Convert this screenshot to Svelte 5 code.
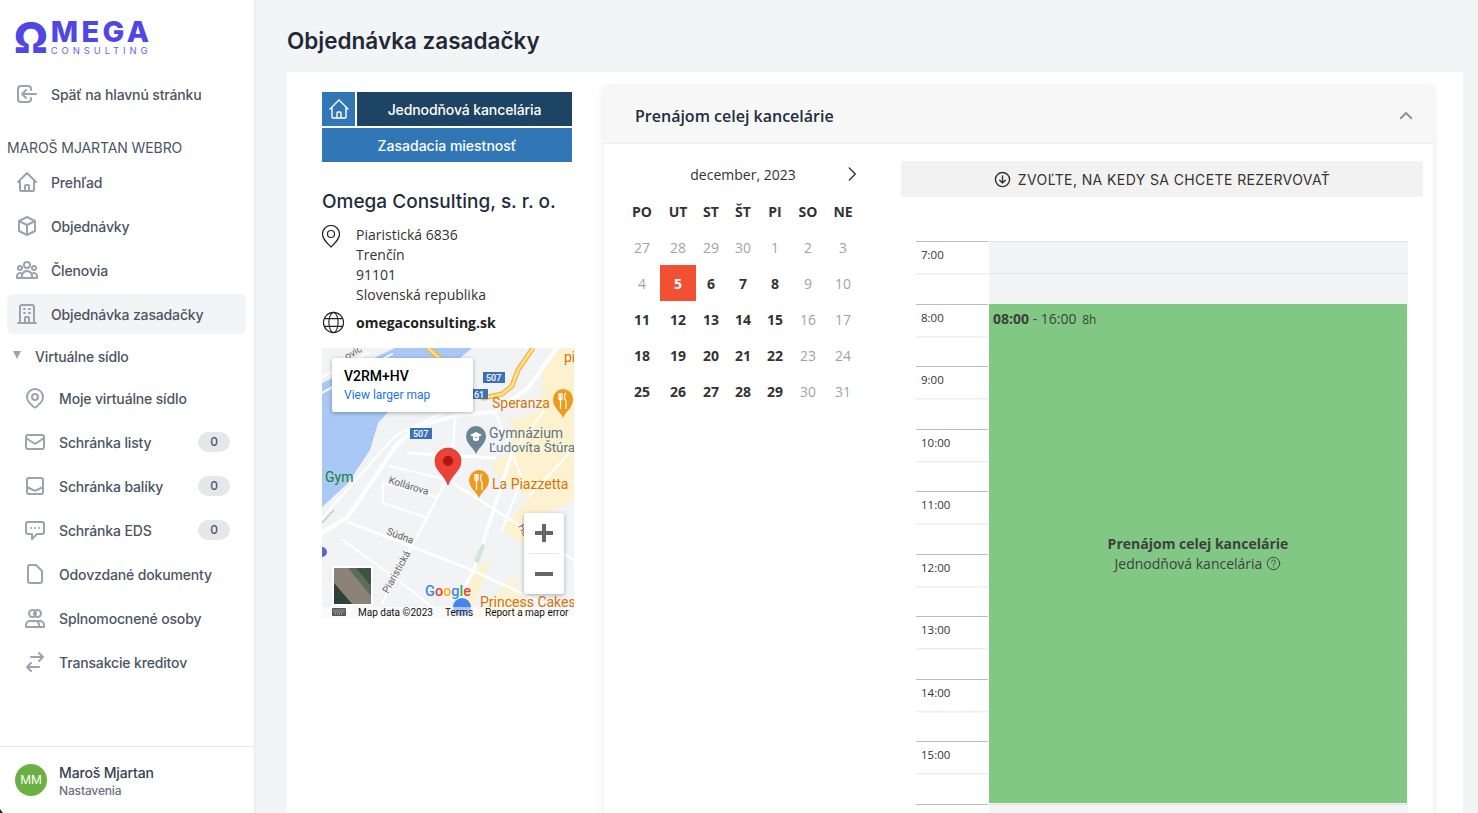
<script>
  const icons = {
    back: 'M11 16l-4-4m0 0l4-4m-4 4h14m-5 4v1a3 3 0 01-3 3H6a3 3 0 01-3-3V7a3 3 0 013-3h7a3 3 0 013 3v1',
    home: 'M3 12l2-2m0 0l7-7 7 7M5 10v10a1 1 0 001 1h3m10-11l2 2m-2-2v10a1 1 0 01-1 1h-3m-6 0a1 1 0 001-1v-4a1 1 0 011-1h2a1 1 0 011 1v4a1 1 0 001 1m-6 0h6',
    cube: 'M20 7l-8-4-8 4m16 0l-8 4m8-4v10l-8 4m0-10L4 7m8 4v10M4 7v10l8 4',
    group: 'M17 20h5v-2a3 3 0 00-5.356-1.857M17 20H7m10 0v-2c0-.656-.126-1.283-.356-1.857M7 20H2v-2a3 3 0 015.356-1.857M7 20v-2c0-.656.126-1.283.356-1.857m0 0a5.002 5.002 0 019.288 0M15 7a3 3 0 11-6 0 3 3 0 016 0zm6 3a2 2 0 11-4 0 2 2 0 014 0zM7 10a2 2 0 11-4 0 2 2 0 014 0z',
    building: 'M19 21V5a2 2 0 00-2-2H7a2 2 0 00-2 2v16m14 0h2m-2 0h-5m-9 0H3m2 0h5M9 7h1m-1 4h1m4-4h1m-1 4h1m-5 10v-5a1 1 0 011-1h2a1 1 0 011 1v5m-4 0h4',
    pin: 'M17.657 16.657L13.414 20.9a1.998 1.998 0 01-2.827 0l-4.244-4.243a8 8 0 1111.314 0zM15 11a3 3 0 11-6 0 3 3 0 016 0z',
    mail: 'M3 8l7.89 5.26a2 2 0 002.22 0L21 8M5 19h14a2 2 0 002-2V7a2 2 0 00-2-2H5a2 2 0 00-2 2v10a2 2 0 002 2z',
    inbox: 'M6 4h12a2 2 0 012 2v12a2 2 0 01-2 2H6a2 2 0 01-2-2V6a2 2 0 012-2zM4 13l6.9 3.4a2.5 2.5 0 002.2 0L20 13',
    chat: 'M8 10h.01M12 10h.01M16 10h.01M9 16H5a2 2 0 01-2-2V6a2 2 0 012-2h14a2 2 0 012 2v8a2 2 0 01-2 2h-5l-5 5v-5z',
    doc: 'M7 21h10a2 2 0 002-2V9.414a1 1 0 00-.293-.707l-5.414-5.414A1 1 0 0012.586 3H7a2 2 0 00-2 2v14a2 2 0 002 2z',
    users: 'M13 7.5a3.5 3.5 0 11-7 0 3.5 3.5 0 017 0zM18 7.5a3.5 3.5 0 11-7 0 3.5 3.5 0 017 0zM3 21v-2a4 4 0 014-4h5a4 4 0 014 4v2zM15 15h2a4 4 0 014 4v2h-5',
    swap: 'M8 7h12m0 0l-4-4m4 4l-4 4m0 6H4m0 0l4 4m-4-4l4-4'
  };

  const mainNav = [
    { icon: 'home', label: 'Prehľad' },
    { icon: 'cube', label: 'Objednávky' },
    { icon: 'group', label: 'Členovia' },
    { icon: 'building', label: 'Objednávka zasadačky', active: true }
  ];

  const subNav = [
    { icon: 'pin', label: 'Moje virtuálne sídlo' },
    { icon: 'mail', label: 'Schránka listy', badge: 0 },
    { icon: 'inbox', label: 'Schránka balíky', badge: 0 },
    { icon: 'chat', label: 'Schránka EDS', badge: 0 },
    { icon: 'doc', label: 'Odovzdané dokumenty' },
    { icon: 'users', label: 'Splnomocnené osoby' },
    { icon: 'swap', label: 'Transakcie kreditov' }
  ];

  const weekdays = ['PO', 'UT', 'ST', 'ŠT', 'PI', 'SO', 'NE'];

  // muted = outside the bookable range
  const days = [
    ...[27, 28, 29, 30, 1, 2, 3, 4].map((d) => ({ d, muted: true })),
    { d: 5, today: true },
    ...[6, 7, 8].map((d) => ({ d })),
    ...[9, 10].map((d) => ({ d, muted: true })),
    ...[11, 12, 13, 14, 15].map((d) => ({ d })),
    ...[16, 17].map((d) => ({ d, muted: true })),
    ...[18, 19, 20, 21, 22].map((d) => ({ d })),
    ...[23, 24].map((d) => ({ d, muted: true })),
    ...[25, 26, 27, 28, 29].map((d) => ({ d })),
    ...[30, 31].map((d) => ({ d, muted: true }))
  ];

  const hours = [7, 8, 9, 10, 11, 12, 13, 14, 15, 16];
</script>

{#snippet icon(name)}
  <svg class="nav-icon" viewBox="0 0 24 24" fill="none" stroke="currentColor" stroke-width="2" stroke-linecap="round" stroke-linejoin="round">
    <path d={icons[name]} />
  </svg>
{/snippet}

<div class="app">
  <aside class="sidebar">
    <div class="logo">
      <span class="logo-omega">Ω</span>
      <div class="logo-words">
        <span class="logo-mega">MEGA</span>
        <span class="logo-sub">CONSULTING</span>
      </div>
    </div>

    <div class="nav-item">
      {@render icon('back')}
      <span>Späť na hlavnú stránku</span>
    </div>

    <div class="org">MAROŠ MJARTAN WEBRO</div>

    <nav class="nav">
      {#each mainNav as item}
        <div class="nav-item" class:active={item.active}>
          {@render icon(item.icon)}
          <span>{item.label}</span>
        </div>
      {/each}
    </nav>

    <div class="group-head">
      <span class="caret"></span>
      <span>Virtuálne sídlo</span>
    </div>

    <nav class="nav subnav">
      {#each subNav as item}
        <div class="nav-item sub">
          {@render icon(item.icon)}
          <span class="grow">{item.label}</span>
          {#if item.badge !== undefined}
            <span class="badge">{item.badge}</span>
          {/if}
        </div>
      {/each}
    </nav>

    <div class="profile">
      <div class="avatar">MM</div>
      <div class="profile-text">
        <div class="profile-name">Maroš Mjartan</div>
        <div class="profile-link">Nastavenia</div>
      </div>
    </div>
    <span class="corner"></span>
  </aside>

  <main class="main">
    <h1>Objednávka zasadačky</h1>

    <section class="panel">
      <div class="office">
        <div class="tabs">
          <div class="tab-row">
            <div class="tab home">
              <svg viewBox="0 0 24 24" fill="none" stroke="currentColor" stroke-width="1.4" stroke-linecap="round" stroke-linejoin="round">
                <path d={icons.home} />
              </svg>
            </div>
            <div class="tab dark">Jednodňová kancelária</div>
          </div>
          <div class="tab">Zasadacia miestnosť</div>
        </div>

        <h2>Omega Consulting, s. r. o.</h2>

        <div class="address">
          <svg class="addr-icon" viewBox="3 1 18 23" fill="none" stroke="#222" stroke-width="1.2" stroke-linejoin="round">
            <path d="M12 1.5a8.5 8.5 0 00-8.5 8.5c0 5 4 8.5 8.5 13 4.5-4.5 8.5-8 8.5-13A8.5 8.5 0 0012 1.5z" />
            <circle cx="12" cy="10" r="3.5" />
          </svg>
          <div>
            <div>Piaristická 6836</div>
            <div>Trenčín</div>
            <div>91101</div>
            <div>Slovenská republika</div>
          </div>
        </div>

        <div class="web">
          <svg class="web-icon" viewBox="0 0 24 24" fill="none" stroke="#222" stroke-width="1.2">
            <circle cx="12" cy="12" r="10.5" />
            <ellipse cx="12" cy="12" rx="4.8" ry="10.5" />
            <path d="M2.5 8h19M2.5 16h19" />
          </svg>
          <strong>omegaconsulting.sk</strong>
        </div>

        <div class="map">
          <svg viewBox="0 0 252 270" width="252" height="270">
            <rect width="252" height="270" fill="#f1f3f4" />
            <path d="M73 0H150L126 20 93 35 56 75 48 102 26 135 0 159V35Z" fill="#a9c8f5" />
            <g fill="#fdf2cf">
              <path d="M188 72 218 63 221 23 231 0H252V152L226 165 200 195 180 182 206 149 173 125 170 115 190 102Z" />
              <path d="M156 219 170 212 150 259H133Z" />
              <path d="M160 262 190 225 205 255V270H150Z" opacity=".7" />
            </g>
            <g fill="none" stroke="#fff" stroke-linecap="round" stroke-linejoin="round">
              <path stroke-width="4" d="M0 185 26 169 73 99 93 79 136 67 173 64 206 40 235 0" />
              <path stroke-width="2" d="M0 29 46 5M0 45 70 6M0 170 73 88 120 65" />
              <path stroke-width="2.5" d="M126 132 200 179 252 212" />
              <path stroke-width="2.5" d="M123 135 60 255" />
              <path stroke-width="2" d="M61 135 113 149M61 135V155L103 169M68 118 126 132" />
              <path stroke-width="2.5" d="M26 174 150 222 252 270" />
              <path stroke-width="2" d="M21 192 93 245 110 259" />
              <path stroke-width="3" d="M86 105 173 110" />
              <path stroke-width="2" d="M133 67 131 105" />
              <path stroke-width="3.5" d="M190 105 153 219 133 259" />
              <path stroke-width="2" d="M173 64 190 105 200 130 180 182M190 105 222 63M206 149 252 100" />
            </g>
            <path d="M106 0 123 15 150 43 161 50 180 46 190 38 196 22 211 0" fill="none" stroke="#f2b53a" stroke-width="5" />
            <path d="M106 0 123 15 150 43 161 50 180 46 190 38 196 22 211 0" fill="none" stroke="#fde293" stroke-width="2.5" />
            <path d="M152 212 160 195 163 198 156 216Z" fill="#cfe8d4" />
            <path d="M0 175 12 162" stroke="#7cc48a" stroke-width="1" fill="none" />

            <g font-family="Roboto, sans-serif">
              <g fill="#3b71b8">
                <rect x="161" y="24" width="22" height="11" />
                <rect x="88" y="80" width="22" height="11" />
                <rect x="150" y="41" width="16" height="10" />
              </g>
              <g fill="#fff" font-size="9" font-weight="500">
                <text x="164" y="33">507</text>
                <text x="91" y="89">507</text>
                <text x="152" y="49.5">61</text>
              </g>
              <text x="170" y="60" font-size="14" fill="#d4730d">Speranza</text>
              <text x="170" y="141" font-size="14" fill="#d4730d">La Piazzetta</text>
              <text x="158" y="259" font-size="14" fill="#d4730d">Princess Cakes</text>
              <text x="167" y="90" font-size="14" fill="#5b7683">Gymnázium</text>
              <text x="167" y="104" font-size="13.5" fill="#5b7683">Ľudovíta Štúra</text>
              <text x="3" y="134" font-size="14" fill="#188038">Gym</text>
              <text x="242" y="14" font-size="14" fill="#d4730d">pi</text>
              <g fill="#5f6368" font-size="10">
                <text transform="translate(66 135) rotate(17)">Kollárova</text>
                <text transform="translate(64 186) rotate(21)">Súdna</text>
                <text transform="translate(66 246) rotate(-61)">Piaristická</text>
                <text transform="translate(196 178) rotate(62)">Ho</text>
                <text transform="translate(25 12) rotate(-30)">ovic</text>
              </g>
            </g>

            <circle cx="0" cy="204" r="5" fill="#5c6bc0" />
            <circle cx="140" cy="259" r="9" fill="#4285f4" />

            <path d="M154 106C151 99 144 96 144 88a10 10 0 0120 0C164 96 157 99 154 106Z" fill="#6b8594" />
            <path d="M148 87l6-3 6 3-6 3ZM151 89v3c2 1.5 4 1.5 6 0v-3" fill="#fff" />
            <path d="M157 150C154 143 147 140 147 132a10 10 0 0120 0C167 140 160 143 157 150Z" fill="#ef9a1d" />
            <path d="M153 126v6a2 2 0 003 0v-6M154.5 126v16M160 126c-2 1-2 7 0 8v8" fill="none" stroke="#fff" stroke-width="1.2" />
            <path d="M241 70C238 63 231 60 231 51a10 10 0 0120 0C251 60 244 63 241 70Z" fill="#ef9a1d" />
            <path d="M237 45v6a2 2 0 003 0v-6M238.5 45v16M244 45c-2 1-2 7 0 8v8" fill="none" stroke="#fff" stroke-width="1.2" />

            <path d="M126 137C122 126 113 123 113 113a13 13 0 0126 0C139 123 130 126 126 137Z" fill="#ea4335" stroke="#c5221f" stroke-width=".6" />
            <circle cx="126" cy="113" r="5" fill="#b31412" />

            <text x="103" y="248" font-family="Roboto, sans-serif" font-size="14.5" font-weight="500"><tspan fill="#4285f4">G</tspan><tspan fill="#ea4335">o</tspan><tspan fill="#fbbc05">o</tspan><tspan fill="#4285f4">g</tspan><tspan fill="#34a853">l</tspan><tspan fill="#ea4335">e</tspan></text>

            <rect x="10" y="218" width="41" height="40" fill="#fff" />
            <rect x="12" y="220" width="37" height="36" fill="#5d6b5c" />
            <path d="M12 220H26L49 248V256H30L12 235Z" fill="#8b8378" />
            <path d="M12 235 30 256H12Z" fill="#2f3f3a" />
            <path d="M34 220H49V238Z" fill="#3f5344" />

            <rect y="259" width="252" height="11" fill="#fff" opacity=".55" />
            <rect x="10" y="260" width="14" height="8" rx="1" fill="#555" />
            <path d="M11.5 262h11M11.5 264h11M13 266h8" stroke="#fff" stroke-width=".8" stroke-dasharray="1 1" />
            <g font-family="Roboto, sans-serif" font-size="10" fill="#111">
              <text x="36" y="267.5">Map data ©2023</text>
              <text x="123" y="267.5">Terms</text>
              <text x="163" y="267.5">Report a map error</text>
            </g>
          </svg>

          <div class="map-card">
            <div class="map-code">V2RM+HV</div>
            <div class="map-link">View larger map</div>
          </div>

          <div class="map-zoom">
            <span class="zoom-btn"><i class="bar"></i><i class="bar up"></i></span>
            <span class="zoom-sep"></span>
            <span class="zoom-btn"><i class="bar"></i></span>
          </div>
        </div>
      </div>

      <div class="card">
        <header class="card-head">
          <span>Prenájom celej kancelárie</span>
          <svg viewBox="0 0 24 24" width="18" height="18" fill="none" stroke="#8b929c" stroke-width="2.6" stroke-linecap="round" stroke-linejoin="round">
            <path d="M5 15l7-7 7 7" />
          </svg>
        </header>

        <div class="card-body">
          <div class="calendar">
            <div class="month">
              <span></span>
              <span class="month-name">december, 2023</span>
              <svg viewBox="0 0 24 24" width="16" height="16" fill="none" stroke="#333" stroke-width="2" stroke-linecap="round" stroke-linejoin="round">
                <path d="M8 3l9 9-9 9" />
              </svg>
            </div>
            <div class="days">
              {#each weekdays as w}
                <div class="cell weekday">{w}</div>
              {/each}
              {#each days as day}
                <div class="cell" class:muted={day.muted} class:today={day.today}>{day.d}</div>
              {/each}
            </div>
          </div>

          <div class="schedule">
            <div class="prompt">
              <svg viewBox="0 0 24 24" width="17" height="17" fill="none" stroke="#333" stroke-width="2" stroke-linecap="round" stroke-linejoin="round">
                <circle cx="12" cy="12" r="10" />
                <path d="M12 7v10m-4-4l4 4 4-4" />
              </svg>
              <span>ZVOĽTE, NA KEDY SA CHCETE REZERVOVAŤ</span>
            </div>

            <div class="timeline">
              {#each hours as h}
                <div class="hour">
                  <div class="hour-label"><span>{h}:00</span></div>
                  <div class="hour-slot"></div>
                </div>
              {/each}

              <div class="booking">
                <div class="booking-time"><b>08:00</b> - 16:00 <small>8h</small></div>
                <b>Prenájom celej kancelárie</b>
                <div class="booking-type">
                  Jednodňová kancelária
                  <svg viewBox="0 0 24 24" width="15" height="15" fill="none" stroke="#3f3f3f" stroke-width="1.5" stroke-linecap="round">
                    <circle cx="12" cy="12" r="10" />
                    <path d="M9 9.5a3 3 0 115 2c-1.2 1-2 1.5-2 3M12 17.5v.01" />
                  </svg>
                </div>
              </div>
            </div>
          </div>
        </div>
      </div>
    </section>
  </main>
</div>

<style>
  :global(body) {
    margin: 0;
    font-family: 'Open Sans', sans-serif;
    color: #333;
  }

  .app {
    display: flex;
    height: 100vh;
    overflow: hidden;
    background: #f3f4f6;
  }

  /* sidebar */
  .sidebar {
    position: relative;
    width: 254px;
    flex-shrink: 0;
    display: flex;
    flex-direction: column;
    background: #fff;
    border-right: 1px solid #e5e7eb;
    font-family: Inter, sans-serif;
    font-size: 14px;
    font-weight: 500;
    letter-spacing: -0.15px;
    color: #4b5563;
  }

  /* dark sliver of the window corner */
  .corner {
    position: absolute;
    left: 0;
    bottom: 0;
    width: 3px;
    height: 4px;
    background: #222;
    clip-path: polygon(0 0, 100% 100%, 0 100%);
  }

  .logo {
    height: 74px;
    display: flex;
    align-items: flex-start;
    gap: 4px;
    padding-left: 14px;
    box-sizing: border-box;
    color: #4f46e5;
  }

  .logo-omega {
    font-size: 43px;
    font-weight: 800;
    line-height: 42px;
    margin-top: 16px;
  }

  .logo-words {
    display: flex;
    flex-direction: column;
    padding-top: 19px;
    margin-left: -1px;
  }

  .logo-mega {
    font-size: 29px;
    font-weight: 800;
    line-height: 26px;
    letter-spacing: 3.4px;
  }

  .logo-sub {
    font-size: 9.5px;
    font-weight: 400;
    line-height: 11px;
    letter-spacing: 3.9px;
    color: #6366f1;
  }

  .nav {
    display: flex;
    flex-direction: column;
    gap: 4px;
  }

  .nav-item {
    height: 40px;
    margin: 0 8px 0 7px;
    padding-left: 8px;
    display: flex;
    align-items: center;
    gap: 12px;
    border-radius: 6px;
  }

  .nav-item.sub {
    padding-left: 16px;
    padding-right: 16px;
  }

  .nav-item.active {
    background: #f3f4f6;
  }

  .nav-icon {
    width: 24px;
    height: 24px;
    flex-shrink: 0;
    color: #9ca3af;
  }

  .grow {
    flex: 1;
  }

  .org {
    margin: 25px 0 5px 7px;
    height: 18px;
    line-height: 18px;
    font-weight: 400;
    letter-spacing: -0.1px;
  }

  .group-head {
    height: 40px;
    margin-top: 2px;
    padding-left: 13px;
    display: flex;
    align-items: center;
    gap: 14px;
  }

  .subnav {
    margin-top: 2px;
  }

  .caret {
    width: 0;
    height: 0;
    border-left: 4.5px solid transparent;
    border-right: 4.5px solid transparent;
    border-top: 8px solid #9ca3af;
    margin-top: -2px;
  }

  .badge {
    width: 32px;
    height: 20px;
    line-height: 20px;
    border-radius: 10px;
    background: #e5e7eb;
    text-align: center;
    font-size: 12px;
  }

  .profile {
    margin-top: auto;
    height: 66px;
    border-top: 1px solid #e5e7eb;
    padding-left: 15px;
    display: flex;
    align-items: center;
    gap: 12px;
  }

  .profile-text {
    padding-top: 2px;
  }

  .avatar {
    width: 32px;
    height: 32px;
    border-radius: 50%;
    background: #6cb043;
    color: #fff;
    font-size: 12px;
    font-weight: 400;
    line-height: 32px;
    text-align: center;
  }

  .profile-name {
    color: #374151;
    line-height: 18px;
  }

  .profile-link {
    margin-top: 1px;
    font-size: 12px;
    line-height: 16px;
    color: #6b7280;
  }

  /* main */
  .main {
    flex: 1;
    min-width: 0;
    padding: 0 15px 0 32px;
    display: flex;
    flex-direction: column;
  }

  h1 {
    margin: 0;
    height: 72px;
    padding-top: 15px;
    box-sizing: border-box;
    font-family: Inter, sans-serif;
    font-size: 22.5px;
    font-weight: 600;
    line-height: 52px;
    color: #1f2937;
  }

  .panel {
    flex: 1;
    min-height: 0;
    display: flex;
    gap: 30px;
    padding: 15px 30px 0 35px;
    background: #fff;
    overflow: hidden;
  }

  .office {
    width: 252px;
    flex-shrink: 0;
    padding-top: 5px;
  }

  .tabs {
    width: 250px;
    display: flex;
    flex-direction: column;
    gap: 2px;
    font-family: Inter, sans-serif;
  }

  .tab-row {
    display: flex;
    gap: 2px;
  }

  .tab {
    height: 34px;
    display: flex;
    align-items: center;
    justify-content: center;
    background: #3277b5;
    color: #fff;
    font-size: 14px;
    font-weight: 500;
  }

  .tab.home {
    flex: 0 0 33px;
  }

  .tab.home svg {
    width: 24px;
    height: 24px;
  }

  .tab.dark {
    flex: 1;
    background: #1e4465;
    letter-spacing: -0.1px;
  }

  h2 {
    margin: 28px 0 0;
    font-family: Inter, sans-serif;
    font-size: 19px;
    font-weight: 500;
    line-height: 24px;
    color: #1f2d3d;
  }

  .address {
    margin-top: 11px;
    display: flex;
    gap: 16px;
    font-size: 14px;
    line-height: 20px;
    color: #333;
  }

  .addr-icon {
    width: 18px;
    height: 23px;
    flex-shrink: 0;
  }

  .web {
    margin-top: 6px;
    display: flex;
    align-items: center;
    gap: 11px;
    font-size: 14px;
    color: #222;
  }

  .web-icon {
    width: 23px;
    height: 23px;
  }

  .map {
    position: relative;
    margin-top: 14px;
    width: 252px;
    height: 270px;
    overflow: hidden;
  }

  .map svg {
    display: block;
  }

  .map-card {
    position: absolute;
    left: 10px;
    top: 10px;
    width: 141px;
    height: 54px;
    box-sizing: border-box;
    padding: 10px 12px;
    background: #fff;
    border-radius: 2px;
    box-shadow: 0 1px 4px rgba(0, 0, 0, 0.3);
    font-family: Roboto, sans-serif;
  }

  .map-code {
    font-size: 14px;
    font-weight: 500;
    line-height: 17px;
    color: #000;
  }

  .map-link {
    margin-top: 3px;
    font-size: 12px;
    line-height: 14px;
    color: #1a73e8;
  }

  .map-zoom {
    position: absolute;
    left: 202px;
    top: 165px;
    width: 40px;
    height: 81px;
    background: #fff;
    border-radius: 2px;
    box-shadow: 0 1px 4px rgba(0, 0, 0, 0.3);
    display: flex;
    flex-direction: column;
    align-items: center;
  }

  .zoom-btn {
    position: relative;
    height: 40px;
    width: 40px;
    display: flex;
    align-items: center;
    justify-content: center;
  }

  .zoom-sep {
    height: 1px;
    width: 30px;
    background: #e6e6e6;
  }

  .bar {
    width: 18px;
    height: 4px;
    background: #666;
  }

  .bar.up {
    position: absolute;
    transform: rotate(90deg);
  }

  /* booking card */
  .card {
    flex: 1;
    min-width: 0;
    height: 800px;
    background: #fff;
    border-radius: 4px 4px 0 0;
    box-shadow: 0 0 8px rgba(0, 0, 0, 0.1);
  }

  .card-head {
    height: 57px;
    box-sizing: border-box;
    padding: 1px 18px 0 31px;
    display: flex;
    align-items: center;
    justify-content: space-between;
    background: #f7f7f7;
    border-bottom: 1px solid #eee;
    font-size: 16px;
    font-weight: 600;
    color: #1f2d3d;
  }

  .card-body {
    display: flex;
    padding-top: 12px;
  }

  .calendar {
    width: 297px;
    flex-shrink: 0;
    padding-left: 20px;
    box-sizing: border-box;
    font-size: 14px;
  }

  .month {
    width: 236px;
    height: 36px;
    display: grid;
    grid-template-columns: 1fr auto 1fr;
    align-items: center;
    justify-items: center;
  }

  .month-name {
    padding-left: 2px;
  }

  .month svg {
    margin-left: 9px;
    justify-self: end;
  }

  .days {
    margin-top: 1px;
    display: grid;
    grid-template-columns: 36px 36px 30px 34px 30px 36px 34px;
    grid-auto-rows: 36px;
  }

  .cell {
    display: flex;
    align-items: center;
    justify-content: center;
    font-weight: 700;
    color: #333;
  }

  .cell.muted {
    font-weight: 400;
    color: #a3a3a3;
  }

  .cell.today {
    background: #f25033;
    color: #fff;
  }

  .schedule {
    flex: 1;
    min-width: 0;
    padding: 5px 10px 0 0;
  }

  .prompt {
    height: 36px;
    display: flex;
    align-items: center;
    justify-content: center;
    gap: 7px;
    background: #f2f2f2;
    font-family: Inter, sans-serif;
    font-size: 14px;
    letter-spacing: 0.4px;
    color: #333;
  }

  .timeline {
    position: relative;
    margin: 44px 15px 0;
  }

  .hour {
    height: 62.5px;
    display: grid;
    grid-template-columns: 72px 1fr;
    column-gap: 1px;
  }

  .hour-label {
    border-top: 1.5px solid #b9bdc5;
    background: linear-gradient(#eceef0, #eceef0) 0 31px / 100% 1.5px no-repeat;
    padding: 5px 0 0 5px;
    font-size: 11.5px;
    line-height: 16px;
    color: #333;
  }

  .hour-slot {
    border-top: 1.5px solid #e1e3e7;
    background: linear-gradient(#e1e3e7, #e1e3e7) 0 31px / 100% 1px no-repeat, #f3f4f6;
  }

  .booking {
    position: absolute;
    left: 73px;
    right: 1px;
    top: 63px;
    height: 499px;
    display: flex;
    flex-direction: column;
    align-items: center;
    justify-content: center;
    background: #80c883;
    font-size: 14px;
    line-height: 20px;
    color: #3f3f3f;
  }

  .booking-time {
    position: absolute;
    left: 4px;
    top: 5px;
  }

  .booking-time small {
    margin-left: 2px;
    font-size: 12px;
  }

  .booking-type {
    display: flex;
    align-items: center;
    gap: 4px;
  }
</style>
